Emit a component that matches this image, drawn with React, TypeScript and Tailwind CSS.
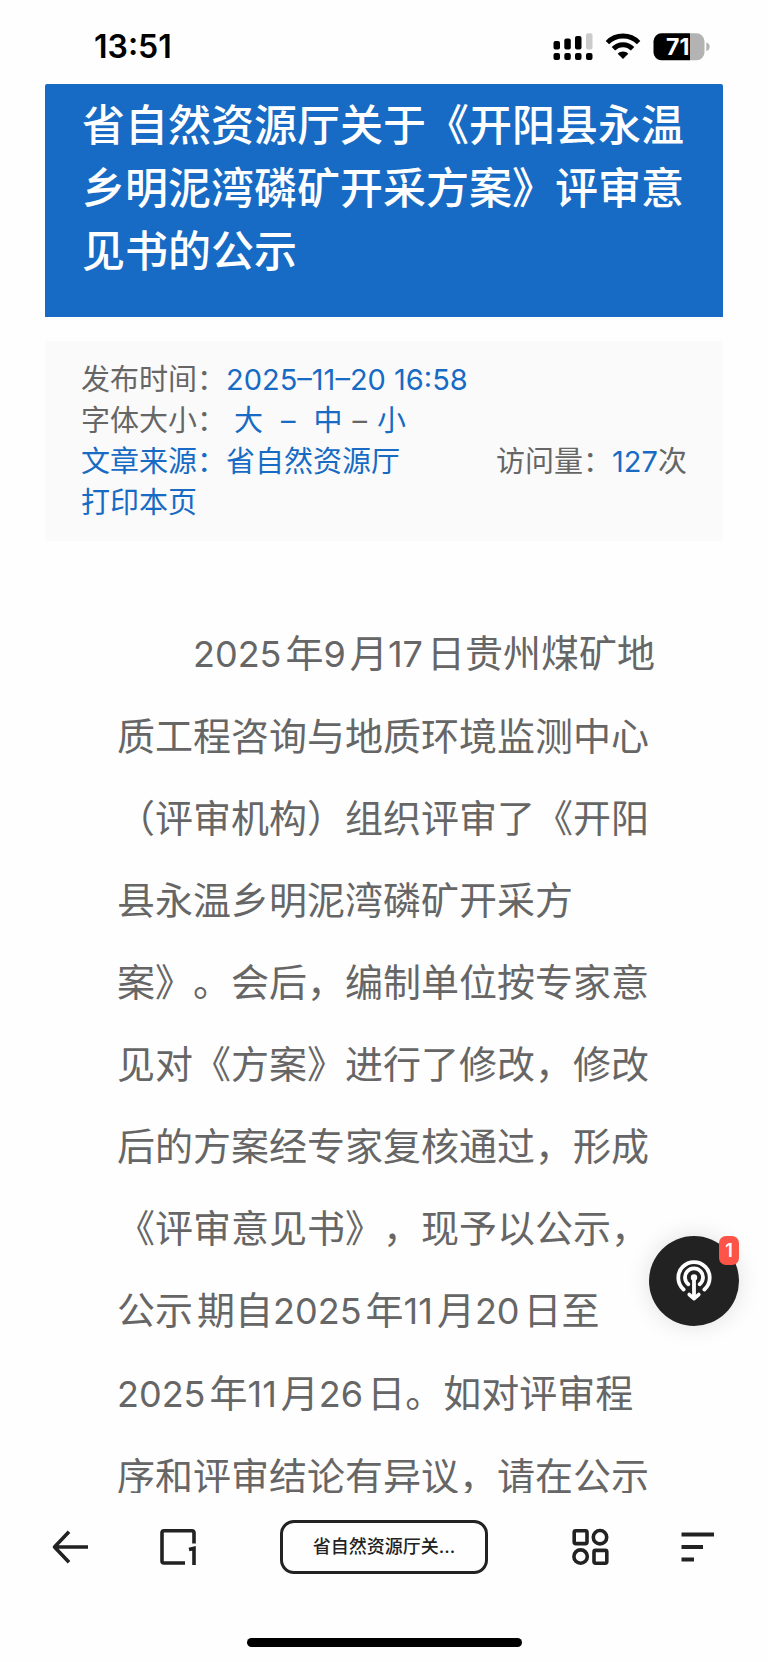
import React from "react";

function SignalIcon() {
  return (
    <svg width="40" height="28" viewBox="0 0 40 28" aria-hidden="true">
      <rect x="0.5" y="8" width="6.5" height="8.5" rx="2" />
      <rect x="11.3" y="5.5" width="6.5" height="11" rx="2" />
      <rect x="22" y="3" width="6.5" height="13.5" rx="2" />
      <rect x="33" y="0.3" width="6.5" height="16.2" rx="2" fill="#cbcbcb" />
      <rect x="0.5" y="20" width="6.5" height="7" rx="2" />
      <rect x="11.3" y="20" width="6.5" height="7" rx="2" />
      <rect x="22" y="20" width="6.5" height="7" rx="2" />
      <rect x="33" y="20" width="6.5" height="7" rx="2" />
    </svg>
  );
}

function WifiIcon() {
  return (
    <svg width="36" height="28" viewBox="0 0 36 28" aria-hidden="true">
      <g fill="none" stroke="#000" strokeWidth="4.8">
        <path d="M2.4 9.6 C11 0.8 25 0.8 33.6 9.6" />
        <path d="M8.4 15.8 C13.8 10.4 22.2 10.4 27.6 15.8" />
      </g>
      <path d="M18 26 L12.7 20.7 C15.5 17.7 20.5 17.7 23.3 20.7 Z" />
    </svg>
  );
}

function BatteryIcon() {
  return (
    <svg width="58" height="28" viewBox="0 0 58 28" role="img" aria-label="71%">
      <clipPath id="shell">
        <rect x="0.5" y="0.3" width="51" height="27" rx="8" />
      </clipPath>
      <g clipPath="url(#shell)">
        <rect width="37" height="28" />
        <rect x="37" width="16" height="28" fill="#b3b3b3" />
      </g>
      <path d="M53.3 9.5 C57.8 10.5 57.8 17 53.3 18 Z" fill="#b3b3b3" />
      <text
        x="13"
        y="22"
        fill="#fff"
        className="font-['Inter',sans-serif] text-[23px] font-bold"
      >
        71
      </text>
    </svg>
  );
}

function StatusBar() {
  return (
    <div className="flex h-[84px] shrink-0 items-center justify-between pt-2.5 pr-[57px] pl-[94px]">
      <time className="font-['Inter',sans-serif] text-[32px] leading-none font-semibold text-black">
        13:51
      </time>
      <div className="flex items-center gap-3">
        <SignalIcon />
        <WifiIcon />
        <BatteryIcon />
      </div>
    </div>
  );
}

function ArticleMeta() {
  return (
    <section className="mt-6 bg-[#fafafa] px-9 py-[18px] text-[29px] leading-[41px] text-[#666]">
      <div>
        发布时间：<span className="text-[#176bc4]">2025–11–20 16:58</span>
      </div>
      <div className="flex">
        <span>字体大小：</span>
        <button type="button" className="ml-2 text-[#176bc4]">大</button>
        <span className="mx-[18px] text-[#176bc4]">–</span>
        <button type="button" className="text-[#176bc4]">中</button>
        <span className="mx-2.5">–</span>
        <button type="button" className="text-[#176bc4]">小</button>
      </div>
      <div className="flex justify-between">
        <span className="text-[#176bc4]">文章来源：省自然资源厅</span>
        <span>
          访问量：<span className="text-[#176bc4]">127</span>次
        </span>
      </div>
      <div>
        <a href="#print" className="text-[#176bc4]">打印本页</a>
      </div>
    </section>
  );
}

function Num({ children }: { children: React.ReactNode }) {
  return <span className="text-[36px]">{children}</span>;
}

function Unit({ children }: { children: React.ReactNode }) {
  return <span className="ml-1">{children}</span>;
}

function ArticleBody() {
  return (
    <p className="mt-[71px] pl-[72px] indent-[76px] text-[38px] leading-[82px] whitespace-nowrap text-[#666]">
      <Num>2025</Num><Unit>年</Unit><Num>9</Num><Unit>月</Unit><Num>17</Num><Unit>日</Unit>贵州煤矿地
      <br />
      质工程咨询与地质环境监测中心
      <br />
      （评审机构）组织评审了《开阳
      <br />
      县永温乡明泥湾磷矿开采方
      <br />
      案》。会后，编制单位按专家意
      <br />
      见对《方案》进行了修改，修改
      <br />
      后的方案经专家复核通过，形成
      <br />
      《评审意见书》，现予以公示，
      <br />
      公示<Unit>期</Unit>自<Num>2025</Num><Unit>年</Unit><Num>11</Num><Unit>月</Unit><Num>20</Num><Unit>日</Unit>至
      <br />
      <Num>2025</Num><Unit>年</Unit><Num>11</Num><Unit>月</Unit><Num>26</Num><Unit>日</Unit>。如对评审程
      <br />
      序和评审结论有异议，请在公示
    </p>
  );
}

function ListenButton() {
  return (
    <button
      type="button"
      aria-label="收听"
      className="absolute right-[29px] bottom-[167px] flex size-[90px] items-center justify-center rounded-full bg-[#222] shadow-[0_0_24px_rgba(0,0,0,0.12)]"
    >
      <svg width="38" height="44" viewBox="0 0 38 44" fill="none" stroke="#fff" strokeWidth="3.8" strokeLinecap="round" strokeLinejoin="round">
        <path d="M8.6 30.5 A15.7 15.7 0 1 1 29.4 30.5" />
        <path d="M13.3 25.3 A9 9 0 1 1 24.7 25.3" />
        <circle cx="19" cy="18.5" r="3.2" fill="#fff" stroke="none" />
        <path d="M19 19 V38 M14.3 35.6 L19 39.6 L23.7 35.6" />
      </svg>
      <span className="absolute top-0 right-0 flex h-[29px] w-5 items-center justify-center rounded-[7px] bg-[#fc5547] text-[18px] leading-none font-semibold text-white">
        1
      </span>
    </button>
  );
}

function Toolbar() {
  return (
    <nav className="flex shrink-0 items-center justify-between pt-[27px] pr-[54px] pl-[52px] text-[#222]">
      <button type="button" aria-label="返回">
        <svg width="36" height="38" viewBox="0 0 36 38" fill="none" stroke="currentColor" strokeWidth="3.6">
          <path d="M36 19 H3 M17 3.8 L2.5 19 L17 34.2" strokeLinejoin="round" />
        </svg>
      </button>
      <button type="button" aria-label="标签页">
        <svg width="36" height="38" viewBox="0 0 36 38" fill="none" stroke="currentColor" strokeWidth="3.6">
          <path d="M34 15.5 V4.8 Q34 2.8 32 2.8 H4 Q2 2.8 2 4.8 V33 Q2 35 4 35 H25" />
          <path d="M29 21.6 L34 20.4 V37" />
        </svg>
      </button>
      <button
        type="button"
        className="mx-3 h-[54px] w-[208px] rounded-[14px] border-3 border-[#222] text-[18px] leading-none font-medium"
      >
        省自然资源厅关...
      </button>
      <button type="button" aria-label="应用">
        <svg width="37" height="38" viewBox="0 0 37 38" fill="none" stroke="currentColor" strokeWidth="3.6">
          <rect x="2.2" y="2.8" width="12.8" height="12.8" rx="1.6" />
          <circle cx="28" cy="9.2" r="6.7" />
          <circle cx="8.6" cy="28.6" r="6.7" />
          <rect x="22" y="22.4" width="12.8" height="12.8" rx="1.6" />
        </svg>
      </button>
      <button type="button" aria-label="菜单">
        <svg width="33" height="38" viewBox="0 0 33 38" stroke="currentColor" strokeWidth="3.8">
          <path d="M0.5 6.5 H33 M0.5 19 H22 M0.5 31.5 H13" />
        </svg>
      </button>
    </nav>
  );
}

export default function App() {
  return (
    <div
      lang="zh-CN"
      className="flex h-screen flex-col overflow-hidden bg-[#fefefe] font-['Inter','Noto_Sans_CJK_SC',sans-serif] [text-spacing-trim:space-all]"
    >
      <StatusBar />
      <main className="relative min-h-0 flex-1 overflow-hidden px-[45px]">
        <h1 className="rounded-t-xs bg-[#176bc4] px-[37px] pt-[10px] pb-[34px] text-[43px] leading-[63px] font-medium text-white">
          省自然资源厅关于《开阳县永温乡明泥湾磷矿开采方案》评审意见书的公示
        </h1>
        <ArticleMeta />
        <ArticleBody />
        <ListenButton />
      </main>
      <Toolbar />
      <div className="flex justify-center pt-16 pb-[15px]">
        <div className="h-[9px] w-[275px] rounded-full bg-black" />
      </div>
    </div>
  );
}
